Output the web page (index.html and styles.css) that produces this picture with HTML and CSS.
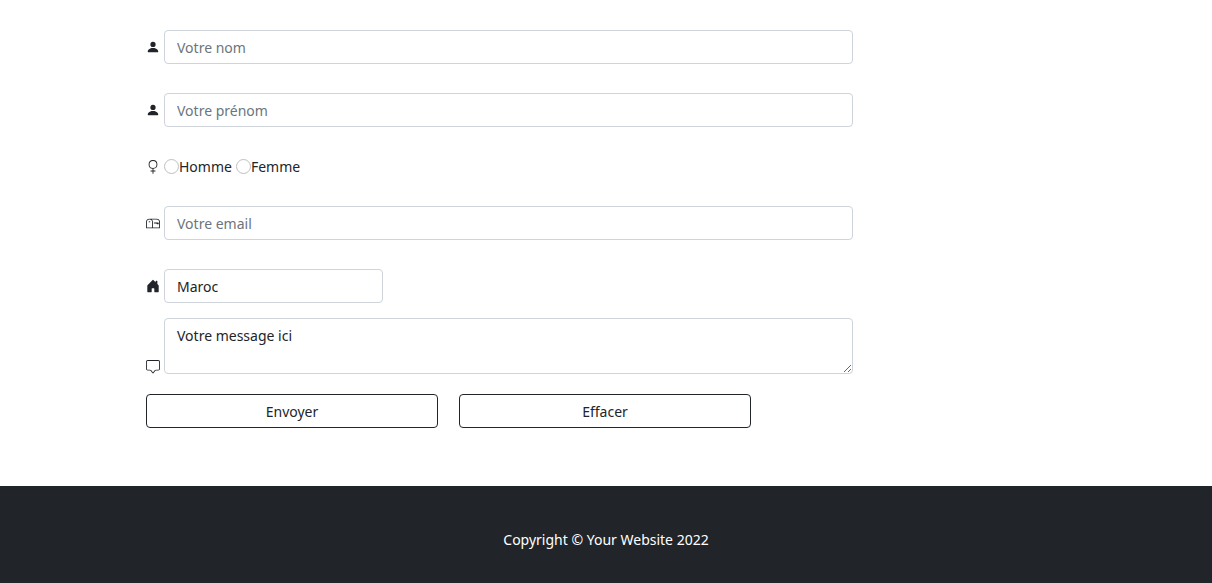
FILE: index.html
```
<!DOCTYPE html>
<html lang="fr">
<head>
<meta charset="utf-8">
<meta name="viewport" content="width=device-width, initial-scale=1">
<title>Contact</title>
<link rel="stylesheet" href="styles.css">
</head>
<body>
<main class="container">
  <form class="contact-form">
    <div class="field">
      <svg class="icon" viewBox="0 0 16 16" aria-hidden="true"><path d="M3 14s-1 0-1-1 1-4 6-4 6 3 6 4-1 1-1 1H3zm5-6a3 3 0 1 0 0-6 3 3 0 0 0 0 6z"/></svg>
      <input class="control" type="text" placeholder="Votre nom" aria-label="Votre nom">
    </div>
    <div class="field">
      <svg class="icon" viewBox="0 0 16 16" aria-hidden="true"><path d="M3 14s-1 0-1-1 1-4 6-4 6 3 6 4-1 1-1 1H3zm5-6a3 3 0 1 0 0-6 3 3 0 0 0 0 6z"/></svg>
      <input class="control" type="text" placeholder="Votre prénom" aria-label="Votre prénom">
    </div>
    <div class="field">
      <svg class="icon" viewBox="0 0 16 16" aria-hidden="true"><path fill-rule="evenodd" d="M8 1a4 4 0 1 0 0 8 4 4 0 0 0 0-8zM3 5a5 5 0 1 1 5.500 4.975V12h2a.5.5 0 0 1 0 1h-2v2.500a.5.5 0 0 1-1 0V13h-2a.5.5 0 0 1 0-1h2V9.975A5 5 0 0 1 3 5z"/></svg>
      <label class="choice"><input class="radio" type="radio" name="sexe">Homme</label>
      <label class="choice"><input class="radio" type="radio" name="sexe">Femme</label>
    </div>
    <div class="field">
      <svg class="icon" viewBox="0 0 16 16" aria-hidden="true"><path d="M4 4a3 3 0 0 0-3 3v6h6V7a3 3 0 0 0-3-3zm0-1h8a4 4 0 0 1 4 4v6a1 1 0 0 1-1 1H1a1 1 0 0 1-1-1V7a4 4 0 0 1 4-4zm2.646 1A3.990 3.990 0 0 1 8 7v6h7V7a3 3 0 0 0-3-3H6.646z"/><path d="M11.793 8.500H9v-1h5a.5.5 0 0 1 .5.5v1a.5.5 0 0 1-.5.5h-1a.5.5 0 0 1-.354-.146l-.853-.854zM5 7c0 .552-.448 0-1 0s-1 .552-1 0a1 1 0 0 1 2 0z"/></svg>
      <input class="control" type="email" placeholder="Votre email" aria-label="Votre email">
    </div>
    <div class="field">
      <svg class="icon" viewBox="0 0 16 16" aria-hidden="true"><path d="M6.500 14.500v-3.505c0-.245.25-.495.5-.495h2c.25 0 .5.250.5.5v3.500a.5.5 0 0 0 .5.5h4a.5.5 0 0 0 .5-.5v-7a.5.5 0 0 0-.146-.354L13 5.793V2.500a.5.5 0 0 0-.5-.5h-1a.5.5 0 0 0-.5.5v1.293L8.354 1.146a.5.5 0 0 0-.708 0l-6 6A.5.5 0 0 0 1.500 7.500v7a.5.5 0 0 0 .5.5h4a.5.5 0 0 0 .5-.5z"/></svg>
      <select class="control control-short" aria-label="Pays"><option>Maroc</option></select>
    </div>
    <div class="field field-message">
      <svg class="icon" viewBox="0 0 16 16" aria-hidden="true"><path d="M14 1a1 1 0 0 1 1 1v8a1 1 0 0 1-1 1h-2.500a2 2 0 0 0-1.600.8L8 14.333 6.100 11.800a2 2 0 0 0-1.600-.8H2a1 1 0 0 1-1-1V2a1 1 0 0 1 1-1h12zM2 0a2 2 0 0 0-2 2v8a2 2 0 0 0 2 2h2.500a1 1 0 0 1 .8.400l1.900 2.533a1 1 0 0 0 1.600 0l1.900-2.533a1 1 0 0 1 .8-.400H14a2 2 0 0 0 2-2V2a2 2 0 0 0-2-2H2z"/></svg>
      <textarea class="control message" rows="2" aria-label="Votre message">Votre message ici</textarea>
    </div>
    <div class="actions">
      <button class="button" type="submit">Envoyer</button>
      <button class="button" type="reset">Effacer</button>
    </div>
  </form>
</main>
<footer class="footer">
  <p class="copyright">Copyright © Your Website 2022</p>
</footer>
</body>
</html>
```
FILE: styles.css
```
*, *::before, *::after { box-sizing: border-box; }

body {
  display: flex;
  flex-direction: column;
  min-height: 100vh;
  margin: 0;
  background: #fff;
  color: #212529;
  font-family: "Segoe UI", "Noto Sans", "Liberation Sans", sans-serif;
  font-size: 14px;
  line-height: 21px;
}

.container {
  width: 100%;
  max-width: 1026px;
  margin: 0 auto;
  padding: 30px 53px 58px;
}

.contact-form {
  display: flex;
  flex-direction: column;
  gap: 29px;
  max-width: 707px;
}

.field {
  display: flex;
  align-items: center;
  gap: 4px;
}

.icon {
  flex: none;
  width: 14px;
  height: 14px;
  fill: currentColor;
}

.control {
  flex: 1;
  min-width: 0;
  height: 34px;
  margin: 0;
  padding: 5px 12px;
  border: 1px solid #ced4da;
  border-radius: 4px;
  background: #fff;
  color: inherit;
  font: inherit;
  appearance: none;
}

.control::placeholder { color: #6c757d; opacity: 1; }

.control-short { flex: 0 1 219px; }

.field-message {
  align-items: flex-end;
  margin-top: -14px;
}

.message {
  height: 56px;
  padding-top: 6px;
  resize: vertical;
}

.choice { display: flex; align-items: center; }

.radio {
  width: 15px;
  height: 15px;
  margin: 0;
  border: 1px solid #bfbfbf;
  border-radius: 50%;
  background: #fff;
  appearance: none;
}

.radio:checked { border: 4px solid #0d6efd; }

.actions {
  display: flex;
  gap: 21px;
  margin-top: -9px;
}

.button {
  flex: 0 1 292px;
  height: 34px;
  padding: 5px 12px;
  border: 1px solid #212529;
  border-radius: 4px;
  background: #fff;
  color: inherit;
  font: inherit;
}

.footer {
  flex: 1;
  padding: 43px 16px;
  background: #212529;
  color: #fff;
  text-align: center;
}

.copyright { margin: 0; }
```
